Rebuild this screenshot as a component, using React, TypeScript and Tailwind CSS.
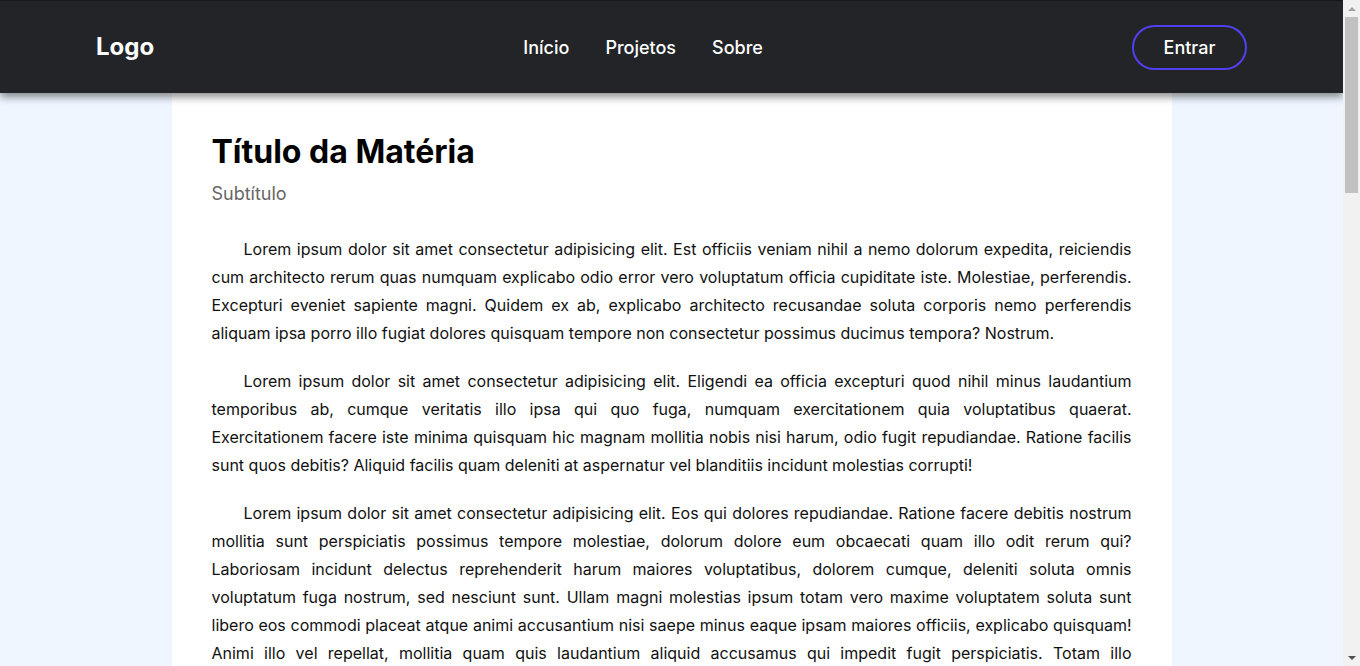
import React from "react";

const paragraphs = [
  "Lorem ipsum dolor sit amet consectetur adipisicing elit. Est officiis veniam nihil a nemo dolorum expedita, reiciendis cum architecto rerum quas numquam explicabo odio error vero voluptatum officia cupiditate iste. Molestiae, perferendis. Excepturi eveniet sapiente magni. Quidem ex ab, explicabo architecto recusandae soluta corporis nemo perferendis aliquam ipsa porro illo fugiat dolores quisquam tempore non consectetur possimus ducimus tempora? Nostrum.",
  "Lorem ipsum dolor sit amet consectetur adipisicing elit. Eligendi ea officia excepturi quod nihil minus laudantium temporibus ab, cumque veritatis illo ipsa qui quo fuga, numquam exercitationem quia voluptatibus quaerat. Exercitationem facere iste minima quisquam hic magnam mollitia nobis nisi harum, odio fugit repudiandae. Ratione facilis sunt quos debitis? Aliquid facilis quam deleniti at aspernatur vel blanditiis incidunt molestias corrupti!",
  "Lorem ipsum dolor sit amet consectetur adipisicing elit. Eos qui dolores repudiandae. Ratione facere debitis nostrum mollitia sunt perspiciatis possimus tempore molestiae, dolorum dolore eum obcaecati quam illo odit rerum qui? Laboriosam incidunt delectus reprehenderit harum maiores voluptatibus, dolorem cumque, deleniti soluta omnis voluptatum fuga nostrum, sed nesciunt sunt. Ullam magni molestias ipsum totam vero maxime voluptatem soluta sunt libero eos commodi placeat atque animi accusantium nisi saepe minus eaque ipsam maiores officiis, explicabo quisquam! Animi illo vel repellat, mollitia quam quis laudantium aliquid accusamus qui impedit fugit perspiciatis. Totam illo consequuntur tempora, recusandae necessitatibus repellendus sint voluptates similique quae ratione. Nesciunt, quaerat provident.",
  "Lorem ipsum dolor sit amet consectetur adipisicing elit. Quibusdam, voluptatum. Magnam, cupiditate dolores illum nisi voluptates sequi aspernatur tempora rem eius quo ab velit, repellendus eveniet. Quaerat maiores eaque sint officiis ipsum esse harum corporis, voluptates atque nesciunt.",
];

export default function App() {
  return (
    <div className="flex h-screen overflow-hidden" style={{ fontFamily: "Inter, 'Noto Sans', sans-serif" }}>
      <div className="h-full flex-1 overflow-hidden bg-[#eff6ff]">
        <header className="relative z-10 flex h-[93px] items-center justify-between border-t border-[#17181b] bg-[#232428] px-24 shadow-[0_4px_8px_rgba(0,0,0,0.45)]">
          <div className="text-[24px] font-bold text-white">Logo</div>
          <nav className="flex items-center gap-9 text-[18px] font-medium text-white">
            <a>Início</a>
            <a>Projetos</a>
            <a>Sobre</a>
          </nav>
          <button className="flex h-[45px] w-[115px] items-center justify-center rounded-full border-2 border-[#5140ef] text-[18px] font-medium text-white">
            Entrar
          </button>
        </header>
        <main className="mx-auto max-w-[1000px] bg-white px-10 pb-10 pt-[39px]">
          <h1 className="text-[32px] font-bold leading-tight text-black">Título da Matéria</h1>
          <h2 className="mt-2 text-[18px] text-[#666]">Subtítulo</h2>
          <div className="mt-7">
            {paragraphs.map((p, i) => (
              <p key={i} className="mb-5 indent-8 text-justify text-[16px] leading-7 text-[#111]">
                {p}
              </p>
            ))}
          </div>
        </main>
      </div>
      <div className="flex h-full w-[17px] shrink-0 flex-col bg-[#f1f1f1]">
        <div className="flex h-[17px] items-center justify-center">
          <div className="h-0 w-0 border-x-[4px] border-b-[4px] border-x-transparent border-b-[#a3a3a3]" />
        </div>
        <div className="mx-[2px] h-[176px] bg-[#c1c1c1]" />
        <div className="flex-1" />
        <div className="flex h-[17px] items-center justify-center">
          <div className="h-0 w-0 border-x-[4px] border-t-[4px] border-x-transparent border-t-[#505050]" />
        </div>
      </div>
    </div>
  );
}
